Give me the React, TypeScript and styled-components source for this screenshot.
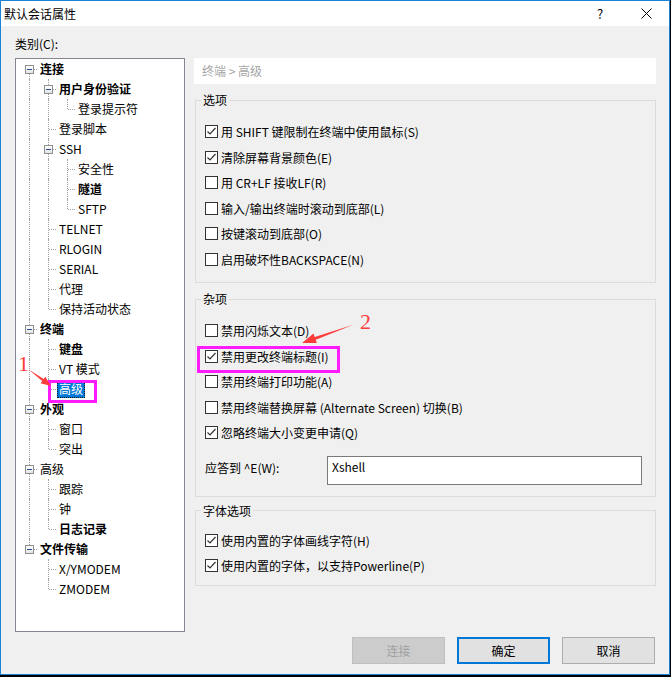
import React from "react";
import styled, { createGlobalStyle, css } from "styled-components";

const GlobalStyle = createGlobalStyle`
  html, body {
    margin: 0;
    padding: 0;
    background: #000;
  }
  body {
    font-family: "Noto Sans CJK SC", "Liberation Sans", sans-serif;
    font-size: 12px;
    color: #000;
  }
  * {
    box-sizing: border-box;
  }
`;

const Screen = styled.div`
  position: relative;
  width: 671px;
  height: 677px;
  background: #000;
  overflow: hidden;
`;

const Window = styled.div`
  width: 670px;
  height: 675px;
  border: 1px solid #1883d7;
  background: #f0f0f0;
  display: flex;
  flex-direction: column;
`;

const TitleBar = styled.div`
  height: 25px;
  background: #fff;
  display: flex;
  align-items: center;
  padding-left: 3px;
  flex-shrink: 0;
`;

const Title = styled.span`
  flex: 1;
  line-height: 25px;
`;

const TitleButton = styled.div`
  width: 46px;
  height: 25px;
  display: flex;
  align-items: center;
  justify-content: center;
  font-size: 13px;
`;

const Body = styled.div`
  flex: 1;
  padding: 9px 0 0 14px;
  display: flex;
  flex-direction: column;
`;

const Caption = styled.div`
  line-height: 18px;
  margin-bottom: 5px;
`;

const Main = styled.div`
  display: flex;
  align-items: flex-start;
  gap: 9px;
`;

/* ---------- tree ---------- */

const TreeBox = styled.div`
  width: 170px;
  height: 574px;
  border: 1px solid #828790;
  background: #fff;
  padding: 0 0 0 4px;
`;

const TreeRow = styled.div`
  display: flex;
  align-items: center;
  height: 20px;
`;

const Guide = styled.div<{ $up?: boolean; $down?: boolean; $across?: boolean }>`
  position: relative;
  width: 19px;
  height: 20px;
  flex-shrink: 0;

  ${(p) =>
    (p.$up || p.$down) &&
    css`
      &::before {
        content: "";
        position: absolute;
        left: 9px;
        top: ${p.$up ? "0" : "10px"};
        bottom: ${p.$down ? "0" : "10px"};
        border-left: 1px dotted #a0a0a0;
      }
    `}

  ${(p) =>
    p.$across &&
    css`
      &::after {
        content: "";
        position: absolute;
        left: 10px;
        right: 2px;
        top: 10px;
        border-top: 1px dotted #a0a0a0;
      }
    `}
`;

const Expander = styled.span`
  position: absolute;
  z-index: 1;
  left: 5px;
  top: 6px;
  width: 9px;
  height: 9px;
  border: 1px solid #8e8f8f;
  background: linear-gradient(#ffffff, #e4e4e4);

  &::after {
    content: "";
    position: absolute;
    left: 1px;
    top: 3px;
    width: 5px;
    height: 1px;
    background: #2f4f8f;
  }
`;

const NodeLabel = styled.span<{ $bold?: boolean; $selected?: boolean }>`
  display: inline-block;
  height: 18px;
  line-height: 16px;
  padding: 0 1px;
  margin-left: -1px;
  white-space: nowrap;
  border: 1px solid transparent;
  font-weight: ${(p) => (p.$bold ? 700 : 400)};

  ${(p) =>
    p.$selected &&
    css`
      background: #0078d7;
      color: #fff;
      border: 1px dotted #1b1b1b;
    `}
`;

type TreeNode = {
  label: string;
  bold?: boolean;
  selected?: boolean;
  children?: TreeNode[];
};

const tree: TreeNode[] = [
  {
    label: "连接",
    bold: true,
    children: [
      { label: "用户身份验证", bold: true, children: [{ label: "登录提示符" }] },
      { label: "登录脚本" },
      {
        label: "SSH",
        children: [{ label: "安全性" }, { label: "隧道", bold: true }, { label: "SFTP" }],
      },
      { label: "TELNET" },
      { label: "RLOGIN" },
      { label: "SERIAL" },
      { label: "代理" },
      { label: "保持活动状态" },
    ],
  },
  {
    label: "终端",
    bold: true,
    children: [
      { label: "键盘", bold: true },
      { label: "VT 模式" },
      { label: "高级", selected: true },
    ],
  },
  {
    label: "外观",
    bold: true,
    children: [{ label: "窗口" }, { label: "突出" }],
  },
  {
    label: "高级",
    children: [{ label: "跟踪" }, { label: "钟" }, { label: "日志记录", bold: true }],
  },
  {
    label: "文件传输",
    bold: true,
    children: [{ label: "X/YMODEM" }, { label: "ZMODEM" }],
  },
];

type FlatRow = {
  node: TreeNode;
  depth: number;
  trail: boolean[];
  first: boolean;
  last: boolean;
};

function flatten(nodes: TreeNode[], depth: number, trail: boolean[], out: FlatRow[]) {
  nodes.forEach((node, i) => {
    const last = i === nodes.length - 1;
    out.push({ node, depth, trail, first: i === 0, last });
    if (node.children) flatten(node.children, depth + 1, [...trail, !last], out);
  });
  return out;
}

const rows = flatten(tree, 0, [], []);

const Tree: React.FC = () => (
  <TreeBox>
    {rows.map((r, i) => (
      <TreeRow key={i}>
        {r.trail.map((on, k) => (
          <Guide key={k} $up={on} $down={on} />
        ))}
        <Guide $up={!(r.depth === 0 && r.first)} $down={!r.last} $across>
          {r.node.children && <Expander />}
        </Guide>
        <NodeLabel $bold={r.node.bold} $selected={r.node.selected}>
          {r.node.label}
        </NodeLabel>
      </TreeRow>
    ))}
  </TreeBox>
);

/* ---------- right panel ---------- */

const Panel = styled.div`
  width: 462px;
  display: flex;
  flex-direction: column;
`;

const Breadcrumb = styled.div`
  height: 26px;
  line-height: 26px;
  background: #fff;
  padding-left: 8px;
  color: #a5a5a5;
`;

const Group = styled.fieldset<{ $top?: number; $bottom?: number; $gap?: number }>`
  margin: ${(p) => p.$gap ?? 8}px 0 0 1px;
  padding: ${(p) => p.$top ?? 11}px 12px ${(p) => p.$bottom ?? 10}px 9px;
  border: 1px solid #dcdcdc;
  min-width: 0;
`;

const GroupTitle = styled.legend`
  padding: 0 2px;
  margin-left: -4px;
  line-height: 16px;
  font-size: 12px;
`;

const CheckRow = styled.div`
  height: 25.5px;
  display: flex;
  align-items: center;
  gap: 3px;
  white-space: nowrap;
`;

const Box = styled.span`
  width: 13px;
  height: 13px;
  border: 1px solid #333;
  background: #fff;
  display: flex;
  align-items: center;
  justify-content: center;
  flex-shrink: 0;
`;

const Check: React.FC<{ label: string; checked?: boolean }> = ({ label, checked }) => (
  <CheckRow>
    <Box>
      {checked && (
        <svg width="11" height="11" viewBox="0 0 11 11">
          <path d="M1.5 5.5 L4 8 L9.5 2" fill="none" stroke="#333" strokeWidth="1.2" />
        </svg>
      )}
    </Box>
    <span>{label}</span>
  </CheckRow>
);

const AnswerRow = styled.div`
  display: flex;
  align-items: flex-start;
  margin-top: 10px;
`;

const AnswerLabel = styled.span`
  width: 122px;
  line-height: 18px;
  padding-top: 3px;
`;

const AnswerField = styled.div`
  width: 315px;
  height: 29px;
  border: 1px solid #7a7a7a;
  background: #fff;
  padding: 1px 0 0 4px;
  line-height: 18px;
`;

/* ---------- footer ---------- */

const Footer = styled.div`
  display: flex;
  justify-content: flex-end;
  gap: 12px;
  margin-top: 5px;
  padding-right: 14px;
`;

type ButtonKind = "disabled" | "primary" | "normal";

const Button = styled.div<{ $kind: ButtonKind }>`
  width: 93px;
  height: 27px;
  display: flex;
  align-items: center;
  justify-content: center;
  background: ${(p) => (p.$kind === "disabled" ? "#cccccc" : "#e1e1e1")};
  color: ${(p) => (p.$kind === "disabled" ? "#a0a0a0" : "#000")};
  border: ${(p) =>
    p.$kind === "primary"
      ? "2px solid #0078d7"
      : p.$kind === "disabled"
      ? "1px solid #bfbfbf"
      : "1px solid #adadad"};
`;

/* ---------- annotations ---------- */

const MarkBox = styled.div<{ $x: number; $y: number; $w: number; $h: number }>`
  position: absolute;
  left: ${(p) => p.$x}px;
  top: ${(p) => p.$y}px;
  width: ${(p) => p.$w}px;
  height: ${(p) => p.$h}px;
  border: 3px solid #ff1aff;
  pointer-events: none;
`;

const StepNumber = styled.span<{ $x: number; $y: number }>`
  position: absolute;
  left: ${(p) => p.$x}px;
  top: ${(p) => p.$y}px;
  font-family: "Liberation Serif", serif;
  font-size: 22px;
  line-height: 22px;
  color: #ff3c3c;
`;

const ArrowLayer = styled.svg`
  position: absolute;
  left: 0;
  top: 0;
  pointer-events: none;
`;

const App: React.FC = () => (
  <Screen>
    <GlobalStyle />
    <Window>
      <TitleBar>
        <Title>默认会话属性</Title>
        <TitleButton>?</TitleButton>
        <TitleButton>
          <svg width="11" height="11" viewBox="0 0 11 11">
            <path d="M0.5 0.5 L10.5 10.5 M10.5 0.5 L0.5 10.5" stroke="#000" strokeWidth="1" />
          </svg>
        </TitleButton>
      </TitleBar>
      <Body>
        <Caption>类别(C):</Caption>
        <Main>
          <Tree />
          <Panel>
            <Breadcrumb>终端 &gt; 高级</Breadcrumb>
            <Group>
              <GroupTitle>选项</GroupTitle>
              <Check checked label="用 SHIFT 键限制在终端中使用鼠标(S)" />
              <Check checked label="清除屏幕背景颜色(E)" />
              <Check label="用 CR+LF 接收LF(R)" />
              <Check label="输入/输出终端时滚动到底部(L)" />
              <Check label="按键滚动到底部(O)" />
              <Check label="启用破坏性BACKSPACE(N)" />
            </Group>
            <Group $bottom={11}>
              <GroupTitle>杂项</GroupTitle>
              <Check label="禁用闪烁文本(D)" />
              <Check checked label="禁用更改终端标题(I)" />
              <Check label="禁用终端打印功能(A)" />
              <Check label="禁用终端替换屏幕 (Alternate Screen) 切换(B)" />
              <Check checked label="忽略终端大小变更申请(Q)" />
              <AnswerRow>
                <AnswerLabel>应答到 ^E(W):</AnswerLabel>
                <AnswerField>Xshell</AnswerField>
              </AnswerRow>
            </Group>
            <Group $gap={6} $top={9} $bottom={6}>
              <GroupTitle>字体选项</GroupTitle>
              <Check checked label="使用内置的字体画线字符(H)" />
              <Check checked label="使用内置的字体，以支持Powerline(P)" />
            </Group>
          </Panel>
        </Main>
        <Footer>
          <Button $kind="disabled">连接</Button>
          <Button $kind="primary">确定</Button>
          <Button $kind="normal">取消</Button>
        </Footer>
      </Body>
    </Window>

    <MarkBox $x={48} $y={380} $w={49} $h={23} />
    <MarkBox $x={197} $y={346} $w={143} $h={27} />
    <StepNumber $x={18} $y={353}>1</StepNumber>
    <StepNumber $x={360} $y={311}>2</StepNumber>
    <ArrowLayer width="671" height="677">
      <polygon
        points="28,369 43.7,379.1 40.6,383.3 51,386 45.3,376.8 42.2,381.0"
        fill="#ff3c3c"
      />
      <polygon
        points="354,324.5 315.7,339.7 316.9,343 302,343 313.5,333.6 314.7,336.9"
        fill="#ff3c3c"
      />
    </ArrowLayer>
  </Screen>
);

export default App;
